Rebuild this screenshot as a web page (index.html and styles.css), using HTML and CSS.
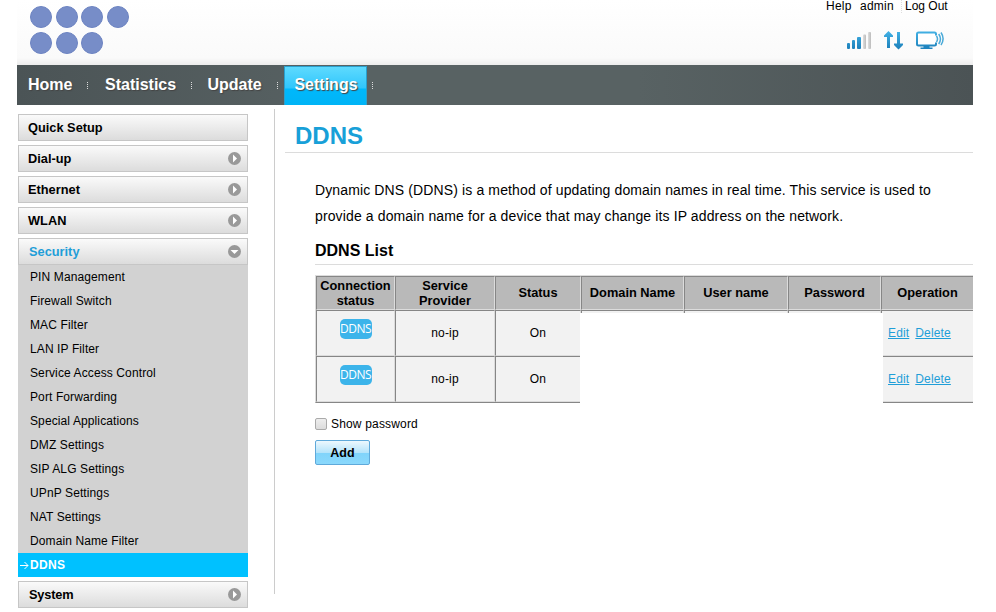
FILE: index.html
```html
<!DOCTYPE html>
<html lang="en">
<head>
    <meta charset="UTF-8">
    <title>DDNS</title>
    <link rel="stylesheet" href="styles.css">
</head>
<body>
    <div class="wrapper">
        <!-- Header -->
        <div class="header">
            <div class="logo">
                <i></i><i></i><i></i><i></i>
                <i></i><i></i><i></i>
            </div>
            <div class="header-right">
                <div class="links">
                    <a class="help">Help</a>
                    <a class="admin">admin</a>
                    <a class="logout">Log Out</a>
                </div>
                <svg class="status-icons" width="100" height="20" viewBox="0 0 100 20">
                    <defs>
                        <linearGradient id="blue" x1="0" y1="0" x2="0" y2="20" gradientUnits="userSpaceOnUse">
                            <stop offset="0" stop-color="#45b5e8"/>
                            <stop offset="1" stop-color="#1a7db8"/>
                        </linearGradient>
                        <linearGradient id="grey" x1="0" y1="0" x2="1" y2="0">
                            <stop offset="0" stop-color="#dedede"/>
                            <stop offset="1" stop-color="#bcbcbc"/>
                        </linearGradient>
                    </defs>
                    <!-- signal -->
                    <rect x="2" y="13" width="3" height="6" rx="1" fill="url(#blue)"/>
                    <rect x="7" y="10" width="3" height="9" rx="1" fill="url(#blue)"/>
                    <rect x="12" y="7" width="4" height="12" rx="1" fill="url(#blue)"/>
                    <rect x="18" y="4.500" width="3" height="14.500" rx="1" fill="url(#grey)"/>
                    <rect x="23" y="2" width="3" height="17" rx="1" fill="url(#grey)"/>
                    <!-- traffic -->
                    <path d="M43.500 1L48 5.500V7h-3v11h-3V7h-3V5.500z" fill="url(#blue)"/>
                    <path d="M53.500 19.500L49 15v-1.500h3V2h3v11.500h3V15z" fill="url(#blue)"/>
                    <!-- device -->
                    <rect x="72" y="2.500" width="19" height="13" rx="1.500" fill="#fff" stroke="url(#blue)" stroke-width="2"/>
                    <path d="M78.500 16h6v1.500h3V19h-12v-1.500h3z" fill="#1f85c0"/>
                    <path d="M90 5.500h4v7h-4z" fill="#fbfbfb"/>
                    <path d="M91.500 6q2 3 0 6M93.700 4q3.500 5 0 10M96 2.500q4.200 6.200 0 12.500" fill="none" stroke="#4aaad8" stroke-width="1.500"/>
                </svg>
            </div>
        </div>

        <!-- Navigation -->
        <div class="nav">
            <a class="home">Home</a><span class="sep"></span>
            <a class="statistics">Statistics</a><span class="sep"></span>
            <a class="update">Update</a><span class="sep"></span>
            <a class="active">Settings</a><span class="sep"></span>
        </div>

        <div class="main">
            <!-- Left menu -->
            <div class="sidebar">
                <div class="menu">Quick Setup</div>
                <div class="menu">Dial-up
                    <svg width="13" height="13" viewBox="0 0 13 13"><circle cx="6.500" cy="6.500" r="6.500"/><path d="M5 2.500v8l4-4z"/></svg>
                </div>
                <div class="menu">Ethernet
                    <svg width="13" height="13" viewBox="0 0 13 13"><circle cx="6.500" cy="6.500" r="6.500"/><path d="M5 2.500v8l4-4z"/></svg>
                </div>
                <div class="menu">WLAN
                    <svg width="13" height="13" viewBox="0 0 13 13"><circle cx="6.500" cy="6.500" r="6.500"/><path d="M5 2.500v8l4-4z"/></svg>
                </div>
                <div class="menu open">Security
                    <svg width="13" height="13" viewBox="0 0 13 13"><circle cx="6.500" cy="6.500" r="6.500"/><path d="M2.500 5h8l-4 4z"/></svg>
                </div>
                <ul class="submenu">
                    <li>PIN Management</li>
                    <li>Firewall Switch</li>
                    <li>MAC Filter</li>
                    <li>LAN IP Filter</li>
                    <li>Service Access Control</li>
                    <li>Port Forwarding</li>
                    <li>Special Applications</li>
                    <li>DMZ Settings</li>
                    <li>SIP ALG Settings</li>
                    <li>UPnP Settings</li>
                    <li>NAT Settings</li>
                    <li>Domain Name Filter</li>
                    <li class="current"><svg width="9" height="9" viewBox="0 0 9 9"><path d="M0 4.500h8M4.500 1L8 4.500 4.500 8"/></svg>DDNS</li>
                </ul>
                <div class="menu system">System
                    <svg width="13" height="13" viewBox="0 0 13 13"><circle cx="6.500" cy="6.500" r="6.500"/><path d="M5 2.500v8l4-4z"/></svg>
                </div>
            </div>

            <div class="divider"></div>

            <!-- Content -->
            <div class="content">
                <h1>DDNS</h1>
                <div class="inner">
                    <p>Dynamic DNS (DDNS) is a method of updating domain names in real time. This service is used to<br>provide a domain name for a device that may change its IP address on the network.</p>
                    <h2>DDNS List</h2>
                    <div class="table-box">
                        <table>
                            <colgroup>
                                <col class="c1"><col class="c2"><col class="c3"><col class="c4"><col class="c5"><col class="c6"><col class="c7">
                            </colgroup>
                            <tr>
                                <th class="two-line">Connection<br>status</th>
                                <th class="two-line">Service<br>Provider</th>
                                <th>Status</th>
                                <th>Domain Name</th>
                                <th>User name</th>
                                <th>Password</th>
                                <th>Operation</th>
                            </tr>
                            <tr>
                                <td><span class="badge">DDNS</span></td>
                                <td>no-ip</td>
                                <td>On</td>
                                <td></td>
                                <td></td>
                                <td></td>
                                <td class="ops"><a href="#">Edit</a><a href="#">Delete</a></td>
                            </tr>
                            <tr>
                                <td><span class="badge">DDNS</span></td>
                                <td>no-ip</td>
                                <td>On</td>
                                <td></td>
                                <td></td>
                                <td></td>
                                <td class="ops"><a href="#">Edit</a><a href="#">Delete</a></td>
                            </tr>
                        </table>
                        <div class="mask"></div>
                    </div>
                    <label class="show"><input type="checkbox"><span>Show password</span></label>
                    <button class="add">Add</button>
                </div>
            </div>
        </div>
    </div>
</body>
</html>
```
FILE: styles.css
```css
* {
    box-sizing: border-box;
}
body {
    margin: 0;
    background: #fff;
    font-family: "Liberation Sans", Arial, sans-serif;
    font-size: 12px;
    color: #000;
    overflow: hidden;
}
.wrapper {
    width: 956px;
    margin-left: 17px;
}

/* Header */
.header {
    display: flex;
    justify-content: space-between;
    height: 65px;
    background: linear-gradient(#fff 0, #fafafa 58px, #ececec 65px);
}
.logo {
    display: grid;
    grid-template-columns: repeat(4, 22px);
    grid-auto-rows: 22px;
    gap: 3.5px;
    padding: 6px 0 0 13px;
}
.logo i {
    border-radius: 50%;
    background: #778dc8;
    border: 1px solid #6d84c2;
}
.header-right {
    width: 147px;
}
.links {
    display: flex;
    height: 13px;
    line-height: 13px;
    letter-spacing: 0.25px;
}
.links .help {
    width: 34px;
}
.links .admin {
    width: 41px;
}
.links .logout {
    border-left: 1px dotted #ddd;
    padding-left: 3px;
    letter-spacing: 0;
}
.status-icons {
    display: block;
    margin: 17px 0 0 19px;
}

/* Navigation */
.nav {
    display: flex;
    align-items: center;
    height: 40px;
    background: linear-gradient(90deg, #4b5456 0, #586263 35%, #586263 65%, #4b5355 100%);
    color: #fff;
    font-size: 16px;
    font-weight: bold;
}
.nav a {
    height: 39px;
    line-height: 38px;
    margin-top: 1px;
    text-shadow: 1px 1px 1px #444;
}
.nav .home {
    padding-left: 11px;
    width: 70px;
}
.nav .statistics {
    padding-left: 17px;
    width: 103px;
}
.nav .update {
    padding-left: 15.5px;
    width: 85px;
}
.nav .active {
    width: 83px;
    margin-left: 6px;
    margin-right: 5px;
    padding-left: 1px;
    text-align: center;
    background: linear-gradient(#5edafe 0, #30c6fc 21px, #00b8fb 22px, #00b4f6 100%);
    border: 1px solid #2a9fcc;
    border-bottom: 0;
    line-height: 36px;
}
.sep {
    width: 1px;
    height: 7px;
    background: repeating-linear-gradient(#ddd 0, #ddd 1px, transparent 1px, transparent 2px);
}

.main {
    display: flex;
}

/* Left menu */
.sidebar {
    width: 230px;
    margin: 9px 0 0 1px;
}
.menu {
    display: flex;
    justify-content: space-between;
    align-items: center;
    height: 27px;
    margin-bottom: 4px;
    padding: 0 6px 0 9px;
    border: 1px solid #c6c6c6;
    background: linear-gradient(#fafafa, #dcdcdc);
    font-size: 12.8px;
    font-weight: bold;
}
.menu circle {
    fill: #999;
}
.menu path {
    fill: #fff;
}
.menu.open {
    margin-bottom: 0;
    padding-left: 10px;
    color: #1f9ed8;
}
.menu.system {
    padding-left: 10px;
    letter-spacing: -0.2px;
}
.submenu {
    margin: 0 0 4px;
    padding: 0;
    list-style: none;
    background: #d2d2d2;
}
.submenu li {
    height: 24px;
    line-height: 24px;
    padding-left: 12px;
    letter-spacing: 0.11px;
}
.submenu .current {
    display: flex;
    align-items: center;
    padding-left: 2px;
    background: #00c1ff;
    color: #fff;
    font-weight: bold;
    letter-spacing: 0.3px;
}
.current svg {
    margin-right: 1px;
    fill: none;
    stroke: #fff;
}
.divider {
    width: 1px;
    height: 485px;
    margin: 4px 10px 0 26px;
    background: #ccc;
}

/* Content */
.content {
    flex: 1;
    min-width: 0;
}
h1 {
    height: 48px;
    margin: 0;
    padding: 17px 0 0 10px;
    border-bottom: 1px solid #dcdcdc;
    color: #18a0d8;
    font-size: 24px;
    line-height: 28px;
}
.inner {
    padding: 24px 0 0 30px;
}
p {
    margin: 0;
    font-size: 14px;
    letter-spacing: 0.125px;
    line-height: 26px;
    white-space: nowrap;
}
h2 {
    height: 36px;
    margin: 0;
    border-bottom: 1px solid #dcdcdc;
    font-size: 16px;
    line-height: 43px;
}
.table-box {
    position: relative;
    margin-top: 10px;
}
table {
    width: 658px;
    table-layout: fixed;
    border-spacing: 0;
    border: 0 solid #dcdcdc;
    border-width: 1px 0 0 1px;
    border-bottom: 1px solid #868686;
}
.c1 { width: 79px; }
.c2 { width: 100px; }
.c3 { width: 86px; }
.c4 { width: 103px; }
.c5 { width: 104px; }
.c6 { width: 93px; }
.c7 { width: 92px; }
th, td {
    padding: 0;
    border: 1px solid #dcdcdc;
    border-top-color: #868686;
    border-left-color: #868686;
    text-align: center;
}
th:last-child, td:last-child {
    border-right: 0;
}
th {
    height: 34px;
    padding-bottom: 2px;
    background: #b9b9b9;
    font-size: 12.8px;
    line-height: 15px;
    white-space: nowrap;
}
th.two-line {
    padding-bottom: 0;
}
td {
    height: 46px;
    background: #f2f2f2;
    letter-spacing: 0.15px;
}
td.ops {
    padding-left: 6px;
    text-align: left;
}
td a {
    margin-right: 6px;
    color: #1f9ed8;
}
.badge {
    display: block;
    width: 32px;
    height: 20px;
    margin: -8px auto 0;
    border-radius: 5px;
    background: #3cb4ea;
    color: #fff;
    font: 12px/20px "Open Sans", sans-serif;
    letter-spacing: -0.5px;
}
/* private columns stay blank */
.mask {
    position: absolute;
    left: 265px;
    top: 38px;
    width: 303px;
    height: 91px;
    background: #fff;
}
.show {
    display: flex;
    align-items: center;
    height: 14px;
    margin-top: 14px;
    letter-spacing: 0.17px;
}
.show input {
    appearance: none;
    width: 12px;
    height: 12px;
    margin: 0 4px 0 0;
    border: 1px solid #aaa;
    border-radius: 2px;
    background: linear-gradient(#eee, #dcdcdc);
}
.add {
    display: block;
    width: 55px;
    height: 25px;
    margin-top: 9px;
    padding: 0;
    border: 1px solid #5fa9da;
    border-radius: 2px;
    background: linear-gradient(#edf8fe 0, #b5e4fb 50%, #80d4fb 51%, #8ad8fc 100%);
    font: bold 12.5px "Liberation Sans", Arial, sans-serif;
}
```
